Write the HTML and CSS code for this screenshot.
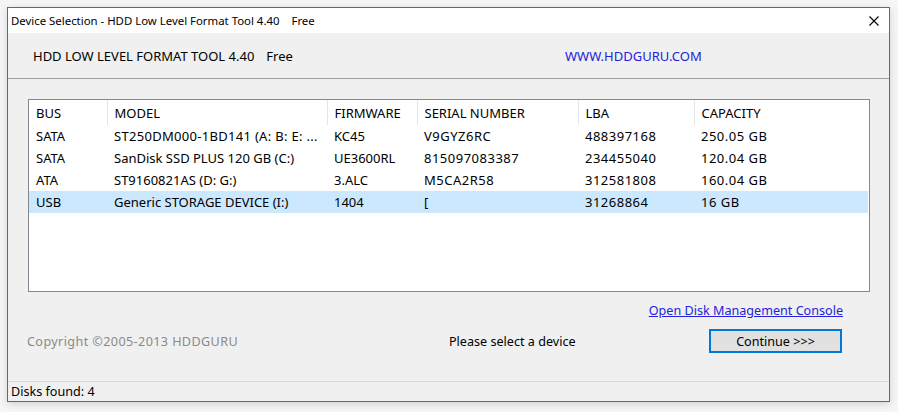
FILE: index.html
```html
<!DOCTYPE html>
<html lang="en">
<head>
  <meta charset="UTF-8">
  <title>Device Selection - HDD Low Level Format Tool 4.40</title>
  <link rel="stylesheet" href="styles.css">
</head>
<body>

  <div class="window">
    <div class="titlebar">
      <span class="title">Device Selection - HDD Low Level Format Tool 4.40<span class="free">Free</span></span>
      <span class="close">
        <svg width="10" height="10" viewBox="0 0 10 10"><path d="M0.5 0.5 L9.5 9.5 M9.5 0.5 L0.5 9.5" stroke="#000" stroke-width="1.1" fill="none"/></svg>
      </span>
    </div>

    <div class="header">
      <span class="product">HDD LOW LEVEL FORMAT TOOL 4.40<span class="free">Free</span></span>
      <span class="site">WWW.HDDGURU.COM</span>
    </div>

    <div class="main">
      <div class="list-box">
        <table class="devices">
          <thead>
            <tr>
              <th class="c-bus">BUS</th>
              <th class="c-model">MODEL</th>
              <th class="c-fw">FIRMWARE</th>
              <th class="c-serial">SERIAL NUMBER</th>
              <th class="c-lba">LBA</th>
              <th class="c-cap">CAPACITY</th>
            </tr>
          </thead>
          <tbody>
            <tr>
              <td>SATA</td><td class="wide">ST250DM000-1BD141 (A: B: E: ...</td><td>KC45</td><td class="num">V9GYZ6RC</td><td class="num">488397168</td><td class="num">250.05 GB</td>
            </tr>
            <tr>
              <td>SATA</td><td>SanDisk SSD PLUS 120 GB (C:)</td><td>UE3600RL</td><td class="num">815097083387</td><td class="num">234455040</td><td class="num">120.04 GB</td>
            </tr>
            <tr>
              <td>ATA</td><td>ST9160821AS (D: G:)</td><td>3.ALC</td><td class="num">M5CA2R58</td><td class="num">312581808</td><td class="num">160.04 GB</td>
            </tr>
            <tr class="selected">
              <td>USB</td><td>Generic STORAGE DEVICE (I:)</td><td>1404</td><td class="num">[</td><td class="num">31268864</td><td class="num">16 GB</td>
            </tr>
          </tbody>
        </table>
      </div>

      <div class="link-row">
        <a href="#" class="disk-link">Open Disk Management Console</a>
      </div>

      <div class="action-row">
        <span class="copyright">Copyright &copy;2005-2013 HDDGURU</span>
        <span class="hint">Please select a device</span>
        <button class="continue">Continue &gt;&gt;&gt;</button>
      </div>
    </div>

    <div class="statusbar">Disks found: 4</div>
  </div>

</body>
</html>
```

FILE: styles.css
```css
* {
  margin: 0;
  padding: 0;
  box-sizing: border-box;
}

body {
  font-family: "Noto Sans", "Open Sans", sans-serif;
  font-size: 12.6px;
  color: #000;
  background-color: #f6f6f6;
  padding: 7px 0 0 7px;
  height: 412px;
  overflow: hidden;
}

.window {
  width: 883px;
  height: 395px;
  border: 1px solid #1c7ad4;
  background-color: #f0f0f0;
  box-shadow: 0 2px 8px rgba(0, 0, 0, 0.15);
  display: flex;
  flex-direction: column;
}

.titlebar {
  height: 25px;
  background-color: #fff;
  display: flex;
  align-items: center;
  justify-content: space-between;
  padding-left: 3px;
  font-size: 11.4px;
}

.free {
  margin-left: 12px;
}

.close {
  width: 30px;
  display: flex;
  justify-content: center;
}

.header {
  height: 46px;
  display: flex;
  align-items: center;
  border-bottom: 1px solid #a0a0a0;
  font-size: 13px;
}

.product {
  padding-left: 25px;
  width: 557px;
}

.site {
  color: #2323dc;
}

.main {
  flex: 1;
  padding: 20px 19px 0 20px;
}

.list-box {
  height: 193px;
  border: 1px solid #828790;
  background-color: #fff;
}

.devices {
  border-collapse: collapse;
  table-layout: fixed;
  width: 839px;
  font-size: 13px;
}

.devices th,
.devices td {
  text-align: left;
  font-weight: normal;
  padding: 0 0 0 7px;
  white-space: nowrap;
  overflow: hidden;
}

.devices th {
  height: 25px;
  border-left: 1px solid #e5e5e5;
}

.devices th:first-child {
  border-left: none;
}

.devices td {
  height: 22px;
}

.devices td.num {
  letter-spacing: 0.5px;
}

.devices td.wide {
  letter-spacing: 0.3px;
}

.c-bus { width: 78px; }
.c-model { width: 220px; }
.c-fw { width: 90px; }
.c-serial { width: 161px; }
.c-lba { width: 116px; }
.c-cap { width: 174px; }

.devices .selected td {
  background-color: #cce8ff;
}

.link-row {
  text-align: right;
  padding-right: 27px;
  margin-top: 10px;
  height: 19px;
}

.disk-link {
  color: #2323dc;
  text-decoration: underline;
}

.action-row {
  display: flex;
  align-items: center;
  margin-top: 8px;
}

.copyright {
  width: 422px;
  margin-left: -1px;
  color: #8a8a8a;
  letter-spacing: 0.4px;
}

.hint {
  flex: 1;
}

.continue {
  width: 133px;
  height: 24px;
  margin-right: 28px;
  border: 2px solid #0078d7;
  background-color: #e1e1e1;
  font-family: inherit;
  font-size: 12.6px;
  color: #000;
}

.statusbar {
  height: 20px;
  border-top: 1px solid #d8d8d8;
  padding-left: 3px;
  line-height: 20px;
}
```
